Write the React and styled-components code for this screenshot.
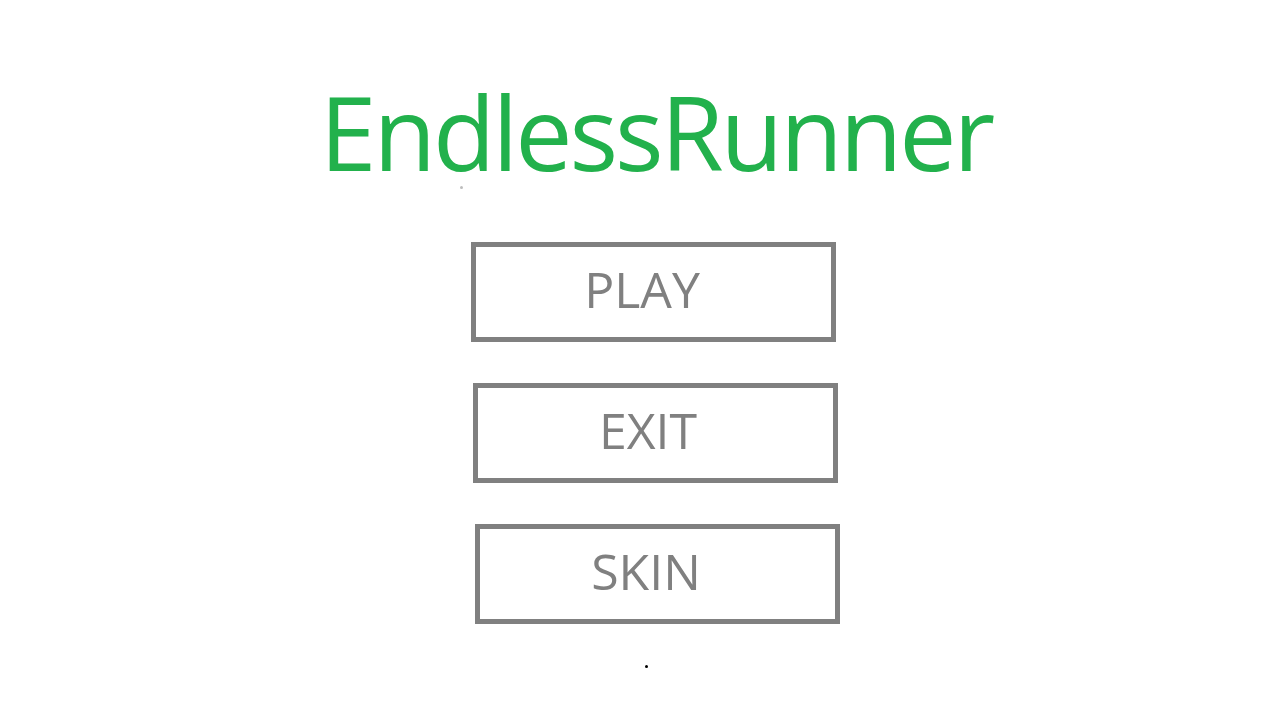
import React from 'react';
import styled, { createGlobalStyle } from 'styled-components';

const GlobalStyle = createGlobalStyle`
  html, body {
    margin: 0;
    padding: 0;
    background: #fff;
  }
  body {
    font-family: "Open Sans", "Noto Sans", sans-serif;
  }
`;

const Screen = styled.div`
  box-sizing: border-box;
  width: 1280px;
  height: 720px;
  padding-left: 32px;
  display: flex;
  flex-direction: column;
  align-items: center;
  overflow: hidden;
`;

const Title = styled.h1`
  margin: 67px 0 0 0;
  height: 130px;
  font-family: "Open Sans", sans-serif;
  font-weight: 400;
  font-size: 102px;
  line-height: 130px;
  letter-spacing: -3px;
  color: #22b14c;
`;

const Speck = styled.div`
  width: 3px;
  height: 3px;
  border-radius: 50%;
  background: ${p => p.color};
  margin-left: ${p => p.dx}px;
  margin-top: ${p => p.dy}px;
`;

const Menu = styled.div`
  display: flex;
  flex-direction: column;
  gap: ${p => p.gap}px;
  margin-top: 53px;
`;

const MenuButton = styled.button`
  box-sizing: border-box;
  width: 365px;
  height: 100px;
  margin-left: ${p => p.shift}px;
  border: 5px solid #808080;
  background: #fff;
  padding: 0 ${p => p.pad}px 6px 0;
  font-family: "Open Sans", sans-serif;
  font-size: 50px;
  color: #808080;
  text-align: center;
  cursor: pointer;
`;

export default function App() {
  return (
    <Screen>
      <GlobalStyle />
      <Title>EndlessRunner</Title>
      <Speck color="#bdbdbd" dx={-390} dy={-11} />
      <Menu gap={41}>
        <MenuButton shift={-2} pad={22}>PLAY</MenuButton>
        <MenuButton shift={0} pad={14}>EXIT</MenuButton>
        <MenuButton shift={2} pad={22}>SKIN</MenuButton>
      </Menu>
      <Speck color="#000" dx={-20} dy={41} />
    </Screen>
  );
}
